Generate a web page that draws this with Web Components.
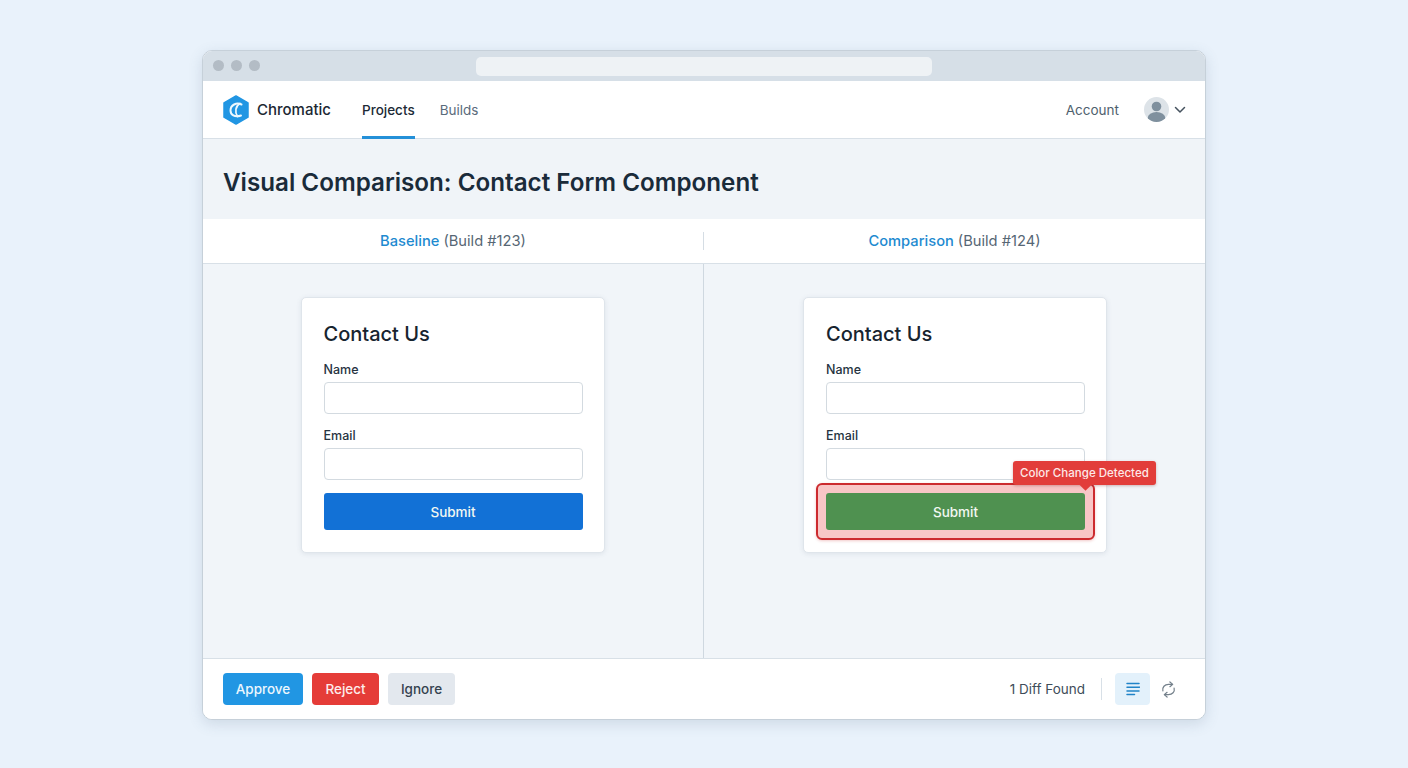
<!DOCTYPE html>
<html lang="en">
<head>
<meta charset="utf-8">
<title>Chromatic</title>
<style>
html,body{margin:0;padding:0;height:100%;}
body{
	background:#e9f2fb;
	font-family:Inter,"Liberation Sans",sans-serif;
	color:#17242f;
	display:flex;
	justify-content:center;
	align-items:flex-start;
	padding-top:50px;
	box-sizing:border-box;
	height:768px;
	overflow:hidden;
}
</style>
</head>
<body>
<browser-frame>
	<top-nav></top-nav>
	<page-title>Visual Comparison: Contact Form Component</page-title>
	<compare-header></compare-header>
	<compare-panels>
		<contact-card slot="left"></contact-card>
		<contact-card slot="right" changed></contact-card>
	</compare-panels>
	<action-bar></action-bar>
</browser-frame>

<script>
class BrowserFrame extends HTMLElement{
	constructor(){
		super();
		this.attachShadow({mode:"open"}).innerHTML = `
<style>
*{box-sizing:border-box;margin:0;padding:0;}
:host{
	box-sizing:border-box;
	display:flex;
	flex-direction:column;
	width:1004px;
	height:670px;
	background:#fff;
	border:1px solid #c6d0d9;
	border-radius:10px;
	overflow:hidden;
	box-shadow:0 4px 14px rgba(70,95,125,0.17);
}
.bar{
	height:30px;
	flex:none;
	background:#d6dfe7;
	position:relative;
	display:flex;
	align-items:center;
	justify-content:center;
}
.dots{position:absolute;left:10px;top:9px;display:flex;gap:7px;}
.dots i{width:11px;height:11px;border-radius:50%;background:#b3bcc5;display:block;}
.url{width:456px;height:19px;border-radius:5px;background:#eef2f5;}
</style>
<div class="bar"><div class="dots"><i></i><i></i><i></i></div><div class="url"></div></div>
<slot></slot>`;
	}
}
customElements.define("browser-frame",BrowserFrame);

class TopNav extends HTMLElement{
	constructor(){
		super();
		this.attachShadow({mode:"open"}).innerHTML = `
<style>
*{box-sizing:border-box;margin:0;padding:0;}
:host{
	box-sizing:border-box;
	display:flex;
	flex:none;
	height:58px;
	align-items:stretch;
	padding:0 20px;
	background:#fff;
	border-bottom:1px solid #d8e0e7;
	font-size:13.5px;
}
.brand{display:flex;align-items:center;gap:7px;width:139px;font-size:15px;font-weight:500;color:#1c2833;}
.brand svg{display:block;}
nav{display:flex;gap:25px;}
nav a{display:flex;align-items:center;color:#5a6b7b;position:relative;}
nav a.on{color:#1c2a36;font-weight:500;}
nav a.on::after{content:"";position:absolute;left:0;right:0;bottom:-1px;height:3px;background:#2490d8;}
.right{margin-left:auto;display:flex;align-items:center;color:#4f5f6e;}
.avatar{margin-left:25px;display:block;}
.chev{margin-left:5px;margin-right:-1px;display:block;}
</style>
<div class="brand">
<svg width="27" height="30" viewBox="0 0 27 30">
<path d="M13 1 L25 7.800 V22.200 L13 29 L1 22.200 V7.800 Z" fill="#2196e3" stroke="#2196e3" stroke-width="1.500" stroke-linejoin="round"/>
<path d="M18.500 9.500 C13.500 7 7.500 10 7.500 15.500 C7.500 19.500 11.500 23 18 20.500" fill="none" stroke="#eef8fe" stroke-width="2" stroke-linecap="round"/>
<path d="M17 8.500 C12.500 11 11.500 17 14.500 21.500" fill="none" stroke="#eef8fe" stroke-width="1.700" stroke-linecap="round"/>
</svg>
<span>Chromatic</span>
</div>
<nav><a class="on">Projects</a><a>Builds</a></nav>
<div class="right">
<span>Account</span>
<svg class="avatar" width="25" height="25" viewBox="0 0 25 25">
<defs><clipPath id="c"><circle cx="12.500" cy="12.500" r="12.500"/></clipPath></defs>
<circle cx="12.500" cy="12.500" r="12.500" fill="#dde3e8"/>
<g clip-path="url(#c)" fill="#7f909e"><circle cx="12.500" cy="9.500" r="4.800"/><ellipse cx="12.500" cy="21" rx="8.800" ry="6"/></g>
</svg>
<svg class="chev" width="12" height="8" viewBox="0 0 12 8"><path d="M1.500 1.500 L6 6 L10.500 1.500" fill="none" stroke="#45525e" stroke-width="1.500" stroke-linecap="round" stroke-linejoin="round"/></svg>
</div>`;
	}
}
customElements.define("top-nav",TopNav);

class PageTitle extends HTMLElement{
	constructor(){
		super();
		this.attachShadow({mode:"open"}).innerHTML = `
<style>
:host{
	box-sizing:border-box;
	display:flex;
	flex:none;
	height:80px;
	align-items:center;
	padding:6px 20px 0;
	background:#f0f4f8;
}
h1{margin:0;font-size:24.2px;font-weight:600;color:#1a2b3a;}
</style>
<h1><slot></slot></h1>`;
	}
}
customElements.define("page-title",PageTitle);

class CompareHeader extends HTMLElement{
	constructor(){
		super();
		this.attachShadow({mode:"open"}).innerHTML = `
<style>
*{box-sizing:border-box;margin:0;padding:0;}
:host{
	box-sizing:border-box;
	display:grid;
	grid-template-columns:500px 1fr;
	flex:none;
	height:45px;
	background:#fff;
	border-bottom:1px solid #d8e0e7;
	font-size:14.700px;
	color:#566674;
}
div{display:flex;align-items:center;justify-content:center;gap:4px;position:relative;padding-bottom:1px;}
div+div{padding-left:1px;}
div+div::before{content:"";position:absolute;left:0;top:13px;height:18px;width:1px;background:#d5dde4;}
b{font-weight:500;color:#1e8ad0;}
</style>
<div><b>Baseline</b> (Build #123)</div>
<div><b>Comparison</b> (Build #124)</div>`;
	}
}
customElements.define("compare-header",CompareHeader);

class ComparePanels extends HTMLElement{
	constructor(){
		super();
		this.attachShadow({mode:"open"}).innerHTML = `
<style>
*{box-sizing:border-box;margin:0;padding:0;}
:host{
	box-sizing:border-box;
	display:grid;
	grid-template-columns:500px 1fr;
	flex:1;
	min-height:0;
	background:#f1f5f9;
}
div{display:flex;justify-content:center;align-items:flex-start;padding-top:33px;padding-right:1px;}
div+div{border-left:1px solid #cfd8e0;padding-left:1px;padding-right:0;}
</style>
<div><slot name="left"></slot></div>
<div><slot name="right"></slot></div>`;
	}
}
customElements.define("compare-panels",ComparePanels);

class ContactCard extends HTMLElement{
	constructor(){
		super();
		const changed = this.hasAttribute("changed");
		this.attachShadow({mode:"open"}).innerHTML = `
<style>
*{box-sizing:border-box;margin:0;padding:0;}
:host{
	box-sizing:border-box;
	display:block;
	width:304px;
	height:256px;
	background:#fff;
	border:1px solid #dfe5eb;
	border-radius:5px;
	padding:22px 21px 0 22px;
	box-shadow:0 1px 5px rgba(80,100,125,0.12);
}
h2{font-size:20px;font-weight:500;line-height:28px;color:#17242f;margin-bottom:13px;}
label{display:block;font-size:12.500px;font-weight:500;line-height:18px;color:#26333f;margin-bottom:3px;}
.field{display:block;height:32px;border:1px solid #d3dae0;border-radius:4px;background:#fff;margin-bottom:13px;}
.submit{
	position:relative;
	height:37px;
	margin-top:13px;
	border-radius:3px;
	background:${changed ? "#4f9150" : "#1271d6"};
	color:#f2f8f2;
	font-size:13.500px;
	font-weight:500;
	display:flex;
	align-items:center;
	justify-content:center;
}
.submit span{position:relative;}
.mark{
	position:absolute;
	left:-10px;right:-10px;top:-10px;bottom:-10px;
	border:2px solid #cc2a2e;
	border-radius:6px;
	background:#f8c6c6;
	box-shadow:0 1px 3px rgba(200,40,40,0.25);
}
.face{position:absolute;inset:0;border-radius:3px;background:#4f9150;}
.tip{
	position:absolute;
	left:187px;top:-32px;
	height:24px;
	padding:0 7px;
	display:flex;
	align-items:center;
	white-space:nowrap;
	border-radius:3px;
	background:#e23d3a;
	color:#fde9e8;
	font-size:11.500px;
	font-weight:500;
	letter-spacing:0.02px;
	box-shadow:0 1px 3px rgba(120,30,30,0.3);
}
.tip::after{
	content:"";
	position:absolute;
	left:68px;bottom:-4px;
	width:9px;height:9px;
	background:#e23d3a;
	transform:rotate(45deg);
}
</style>
<h2>Contact Us</h2>
<label>Name</label>
<div class="field"></div>
<label>Email</label>
<div class="field"></div>
<div class="submit">
${changed ? '<div class="mark"></div><div class="face"></div>' : ''}
<span>Submit</span>
${changed ? '<div class="tip">Color Change Detected</div>' : ''}
</div>`;
	}
}
customElements.define("contact-card",ContactCard);

class ActionBar extends HTMLElement{
	constructor(){
		super();
		this.attachShadow({mode:"open"}).innerHTML = `
<style>
*{box-sizing:border-box;margin:0;padding:0;}
:host{
	box-sizing:border-box;
	display:flex;
	flex:none;
	height:61px;
	align-items:center;
	gap:9px;
	padding:0 20px;
	background:#fff;
	border-top:1px solid #d8e0e7;
	font-size:13.500px;
}
button{
	font:inherit;
	font-weight:500;
	height:32px;
	border:0;
	border-radius:4px;
	display:block;
}
.approve{width:80px;background:#2196e3;color:#ecf7fe;}
.reject{width:67px;background:#e53c38;color:#fdeceb;}
.ignore{width:67px;background:#e3e8ee;color:#35424f;}
.found{margin-left:auto;color:#3e4c59;}
.sep{width:1px;height:22px;background:#d8e0e7;margin:0 4px 0 7px;}
.list{width:35px;height:32px;border-radius:4px;background:#e3f1fb;display:flex;align-items:center;justify-content:center;}
.sync{display:block;margin:0 9px 0 2px;}
</style>
<button class="approve">Approve</button>
<button class="reject">Reject</button>
<button class="ignore">Ignore</button>
<span class="found">1 Diff Found</span>
<span class="sep"></span>
<span class="list">
<svg width="14" height="14" viewBox="0 0 14 14"><path d="M1 1.500H13M1 5.200H13.500M1 8.900H13M1 12.500H8.500" fill="none" stroke="#2184c8" stroke-width="1.500" stroke-linecap="round"/></svg>
</span>
<svg class="sync" width="15" height="17" viewBox="0 0 16 18">
<path d="M2 10.500C1 6.500 4 3.500 8 3.500H12" fill="none" stroke="#74808b" stroke-width="1.300" stroke-linecap="round"/>
<path d="M9.500 1L12.500 3.500L9.500 6" fill="none" stroke="#74808b" stroke-width="1.300" stroke-linecap="round" stroke-linejoin="round"/>
<path d="M14 7.500C15 11.500 12 14.500 8 14.500H4" fill="none" stroke="#74808b" stroke-width="1.300" stroke-linecap="round"/>
<path d="M6.500 12L3.500 14.500L6.500 17" fill="none" stroke="#74808b" stroke-width="1.300" stroke-linecap="round" stroke-linejoin="round"/>
</svg>`;
	}
}
customElements.define("action-bar",ActionBar);
</script>
</body>
</html>
